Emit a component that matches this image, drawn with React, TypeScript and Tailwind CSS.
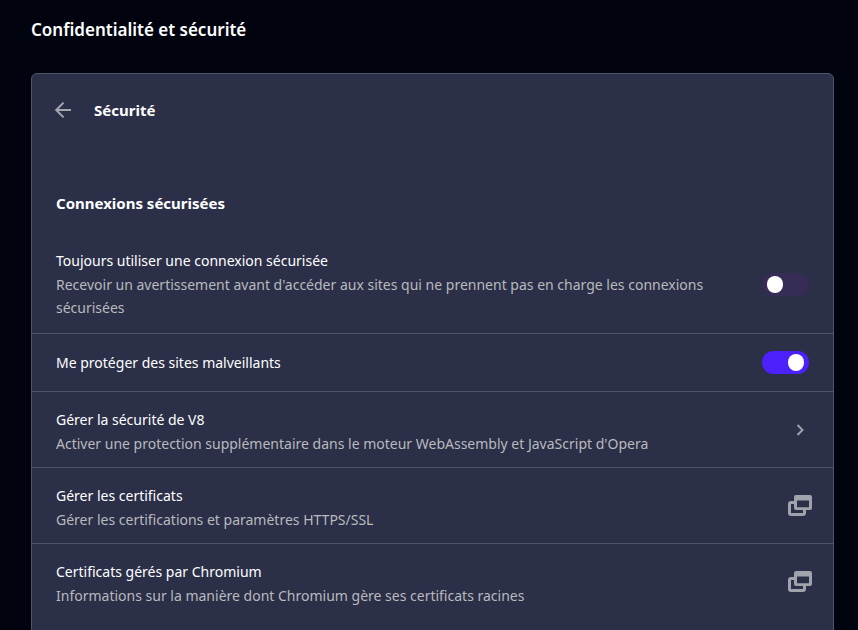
import { useState } from "react"

type Row = {
  id: string
  title: string
  description?: string
  kind: "switch" | "page" | "external"
  defaultOn?: boolean
}

const rows: Row[] = [
  {
    id: "https-only",
    title: "Toujours utiliser une connexion sécurisée",
    description:
      "Recevoir un avertissement avant d'accéder aux sites qui ne prennent pas en charge les connexions sécurisées",
    kind: "switch",
  },
  { id: "malicious-sites", title: "Me protéger des sites malveillants", kind: "switch", defaultOn: true },
  {
    id: "v8",
    title: "Gérer la sécurité de V8",
    description: "Activer une protection supplémentaire dans le moteur WebAssembly et JavaScript d'Opera",
    kind: "page",
  },
  {
    id: "certificates",
    title: "Gérer les certificats",
    description: "Gérer les certifications et paramètres HTTPS/SSL",
    kind: "external",
  },
  {
    id: "chromium-certificates",
    title: "Certificats gérés par Chromium",
    description: "Informations sur la manière dont Chromium gère ses certificats racines",
    kind: "external",
  },
]

function BackIcon() {
  return (
    <svg width="18" height="18" viewBox="0 0 18 18" fill="none" stroke="#a5a7ad" strokeWidth="2" aria-hidden="true">
      <path d="M17 9H2.4M9.6 1.6 2.2 9l7.4 7.4" />
    </svg>
  )
}

function ChevronIcon() {
  return (
    <svg width="8" height="12" viewBox="0 0 8 12" fill="none" stroke="#a0a3ab" strokeWidth="2" aria-hidden="true">
      <path d="M1.5 1l5 5-5 5" />
    </svg>
  )
}

function WindowsIcon() {
  return (
    <svg width="24" height="21" viewBox="0 0 24 21" fill="none" aria-hidden="true">
      <path
        d="M6 7.5H3A1.5 1.5 0 0 0 1.5 9v9A1.5 1.5 0 0 0 3 19.5h12A1.5 1.5 0 0 0 16.5 18v-3"
        stroke="#a0a3ab"
        strokeWidth="3"
      />
      <path
        fill="#a0a3ab"
        fillRule="evenodd"
        d="M8 0h14a2 2 0 0 1 2 2v11a2 2 0 0 1-2 2H8a2 2 0 0 1-2-2V2a2 2 0 0 1 2-2Zm1 5.4v6.8h12V5.4H9Z"
      />
    </svg>
  )
}

function RowText({ title, description }: { title: string; description?: string }) {
  return (
    <span className="block min-w-0 flex-1">
      <span className="block leading-6 text-white">{title}</span>
      {description && <span className="block leading-[23px] text-[#b9babd]">{description}</span>}
    </span>
  )
}

function SwitchRow({ row }: { row: Row }) {
  const [on, setOn] = useState(Boolean(row.defaultOn))

  return (
    <label htmlFor={row.id} className="flex min-h-[57px] cursor-pointer items-center gap-9 px-6 py-[14px]">
      <RowText title={row.title} description={row.description} />
      <input
        id={row.id}
        type="checkbox"
        role="switch"
        checked={on}
        onChange={(e) => setOn(e.target.checked)}
        className="flex h-[23px] w-[47px] shrink-0 cursor-pointer appearance-none items-center rounded-full bg-[#372c56] px-[5px] before:h-[17px] before:w-4 before:rounded-full before:bg-white checked:justify-end checked:bg-[#4d21fc]"
      />
    </label>
  )
}

function LinkRow({ row }: { row: Row }) {
  return (
    <button type="button" className="flex w-full cursor-pointer items-center gap-9 pt-4 pb-3 pr-[21px] pl-6 text-left">
      <RowText title={row.title} description={row.description} />
      <span className="flex w-6 shrink-0 justify-center pb-1">
        {row.kind === "page" ? <ChevronIcon /> : <WindowsIcon />}
      </span>
    </button>
  )
}

export default function App() {
  return (
    <main className="h-screen overflow-hidden bg-[#01040f] pt-4 pr-6 pl-[31px] font-['Noto_Sans','Open_Sans',sans-serif] text-sm">
      <h1 className="text-[17px] leading-7 font-semibold text-white">Confidentialité et sécurité</h1>

      <section className="mt-[29px] min-h-screen rounded-md border border-[#51546a] bg-[#2b2f48]">
        <header className="flex items-center gap-[22px] px-[22px] pt-6">
          <button type="button" aria-label="Retour" className="cursor-pointer">
            <BackIcon />
          </button>
          <h2 className="text-[15px] leading-6 font-bold text-white">Sécurité</h2>
        </header>

        <h3 className="mt-[69px] mb-5 px-6 text-[15px] leading-6 font-bold text-white">Connexions sécurisées</h3>

        <ul className="divide-y divide-[#51546a]">
          {rows.map((row) => (
            <li key={row.id}>{row.kind === "switch" ? <SwitchRow row={row} /> : <LinkRow row={row} />}</li>
          ))}
        </ul>
      </section>
    </main>
  )
}
